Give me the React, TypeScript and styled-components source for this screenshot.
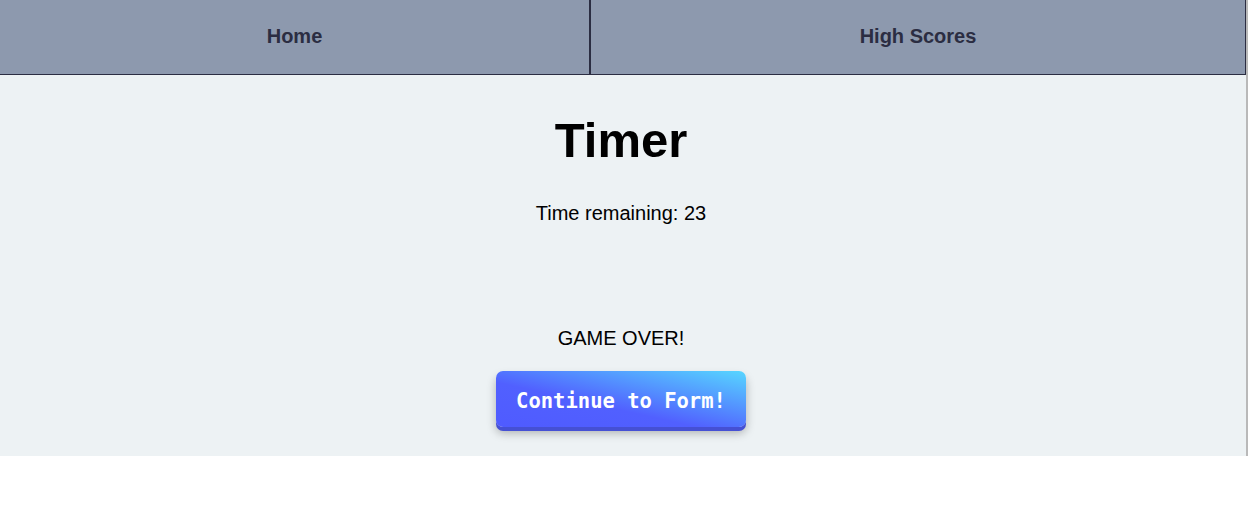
import React from 'react';
import styled, { createGlobalStyle } from 'styled-components';

const GlobalStyle = createGlobalStyle`
  body {
    margin: 0;
    background: #ffffff;
    font-family: "Liberation Sans", Arial, sans-serif;
  }
`;

const Page = styled.div`
  width: 1246px;
  border-right: 2px solid #b9b9b9;
  background: #edf2f4;
`;

const NavBar = styled.nav`
  display: grid;
  grid-template-columns: 590px 1fr;
  height: 74px;
  background: #8d99ae;
  border-bottom: 1px solid #2b2d42;
  border-right: 1px solid #2b2d42;
`;

const NavLink = styled.a<{ $divider?: 'left' | 'right' }>`
  display: flex;
  align-items: center;
  justify-content: center;
  padding-bottom: 2px;
  color: #2b2d42;
  font-size: 20px;
  font-weight: 700;
  text-decoration: none;
  cursor: pointer;
  ${({ $divider }) => ($divider ? `border-${$divider}: 1px solid #2b2d42;` : '')}
`;

const Main = styled.main`
  display: flex;
  flex-direction: column;
  align-items: center;
  padding: 37px 4px 29px 0;
  color: #000000;
`;

const Title = styled.h1`
  margin: 0;
  font-size: 49px;
  font-weight: 700;
`;

const Line = styled.p<{ $gap: number }>`
  margin: ${({ $gap }) => $gap}px 0 0;
  font-size: 20px;
`;

const ContinueButton = styled.button`
  margin-top: 21px;
  height: 56px;
  padding: 3px 20px 0;
  border: none;
  border-radius: 7px;
  color: #ffffff;
  font-family: "DejaVu Sans Mono", "Liberation Mono", monospace;
  font-size: 20.5px;
  font-weight: 700;
  background: linear-gradient(to top right, #4f5bff 0%, #5160ff 40%, #57d6ff 100%);
  box-shadow: 0 4px 0 #4550d4, 0 6px 10px rgba(0, 0, 0, 0.28);
  cursor: pointer;
`;

export default function App() {
  return (
    <>
      <GlobalStyle />
      <Page>
        <NavBar>
          <NavLink $divider="right">Home</NavLink>
          <NavLink $divider="left">High Scores</NavLink>
        </NavBar>
        <Main>
          <Title>Timer</Title>
          <Line $gap={34}>Time remaining: 23</Line>
          <Line $gap={102}>GAME OVER!</Line>
          <ContinueButton>Continue to Form!</ContinueButton>
        </Main>
      </Page>
    </>
  );
}
